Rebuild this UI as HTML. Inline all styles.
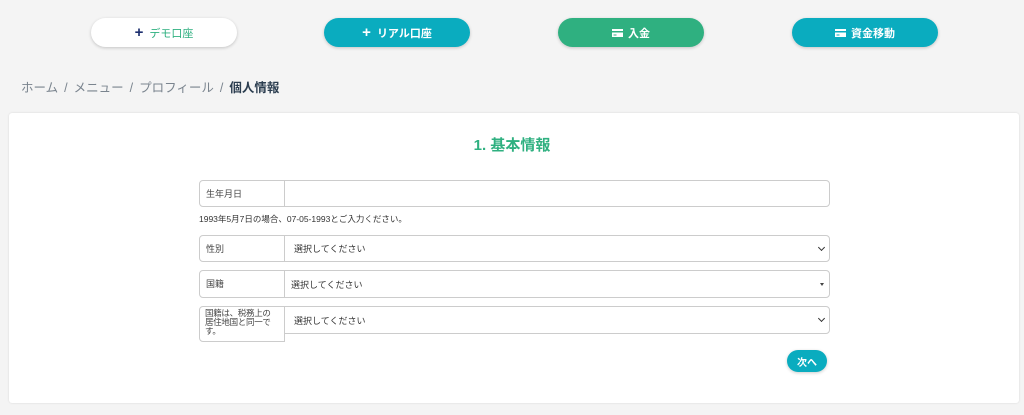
<!DOCTYPE html>
<html><head><meta charset="utf-8"><style>
*{box-sizing:border-box;margin:0;padding:0}
body{width:1024px;height:415px;background:#f4f4f4;font-family:"Liberation Sans","Noto Sans CJK JP",sans-serif;position:relative;overflow:hidden}
.btn{position:absolute;top:18px;width:146px;height:29px;border-radius:15px;color:#fff;font-size:11px;font-weight:bold;display:flex;align-items:center;justify-content:center;box-shadow:0 1px 3px rgba(0,0,0,.2)}
.btn svg{margin-right:5px}
.bc{position:absolute;left:21px;top:77px;font-size:12.5px;color:#7a848e;white-space:nowrap}
.bc i{font-style:normal;display:inline-block;padding:0 6px}
.bc b{color:#2c3e50}
.panel{position:absolute;left:9px;top:113px;width:1010px;height:290px;background:#fff;border-radius:3px;box-shadow:0 0 2px rgba(0,0,0,.12)}
h2{position:absolute;left:0;right:0;top:134px;text-align:center;color:#2fb080;font-size:15px;font-weight:bold}
.lab{position:absolute;left:199px;width:86px;border:1px solid #ccc;border-radius:4px 0 0 4px;font-size:9px;color:#444;padding:6px 6px}
.inp{position:absolute;left:284px;width:546px;border:1px solid #ccc;border-radius:0 4px 4px 0;font-size:9px;color:#333;padding-left:9px;display:flex;align-items:center;background:#fff}
.chev{position:absolute;right:5px;top:50%;margin-top:-4px;width:5px;height:5px;border-right:1.5px solid #333;border-bottom:1.5px solid #333;transform:rotate(45deg)}
.tri{position:absolute;right:5px;top:50%;margin-top:-1px;border-left:2.5px solid transparent;border-right:2.5px solid transparent;border-top:3px solid #444}
</style></head><body>
<div class="btn" style="left:91px;background:#fff;color:#2fb080;font-weight:normal"><span style="color:#1d2f6f;font-size:15px;font-weight:bold;margin-right:6px">+</span>デモ口座</div>
<div class="btn" style="left:324px;background:#0aacbf"><span style="font-size:15px;margin-right:6px">+</span>リアル口座</div>
<div class="btn" style="left:558px;background:#2fb080"><svg width="11" height="8" viewBox="0 0 11 8"><rect x="0" y="0" width="11" height="8" fill="#fff"/><rect x="0" y="2" width="11" height="1.5" fill="#2fb080"/><rect x="1.5" y="5.5" width="3" height="1" fill="#2fb080"/></svg>入金</div>
<div class="btn" style="left:792px;background:#0aacbf"><svg width="11" height="8" viewBox="0 0 11 8"><rect x="0" y="0" width="11" height="8" fill="#fff"/><rect x="0" y="2" width="11" height="1.5" fill="#0aacbf"/><rect x="1.5" y="5.5" width="3" height="1" fill="#0aacbf"/></svg>資金移動</div>
<div class="bc">ホーム<i>/</i>メニュー<i>/</i>プロフィール<i>/</i><b>個人情報</b></div>
<div class="panel"></div>
<h2>1. 基本情報</h2>
<div class="lab" style="top:180px;height:27px">生年月日</div>
<div class="inp" style="top:180px;height:27px"></div>
<div style="position:absolute;left:199px;top:213px;font-size:8.5px;color:#333">1993年5月7日の場合、07-05-1993とご入力ください。</div>
<div class="lab" style="top:235px;height:27px">性別</div>
<div class="inp" style="top:235px;height:27px">選択してください<span class="chev"></span></div>
<div class="lab" style="top:270px;height:28px">国籍</div>
<div class="inp" style="top:270px;height:28px;padding-left:6px">選択してください<span class="tri"></span></div>
<div class="lab" style="top:306px;height:36px;line-height:9px;padding:2px 5px;font-size:8.5px;letter-spacing:-0.3px">国籍は、税務上の<br>居住地国と同一で<br>す。</div>
<div class="inp" style="top:306px;height:28px">選択してください<span class="chev"></span></div>
<div style="position:absolute;left:787px;top:350px;width:40px;height:22px;border-radius:11px;background:#0aacbf;color:#fff;font-size:10px;font-weight:bold;display:flex;align-items:center;justify-content:center;box-shadow:0 1px 3px rgba(0,0,0,.2)">次へ</div>
</body></html>
